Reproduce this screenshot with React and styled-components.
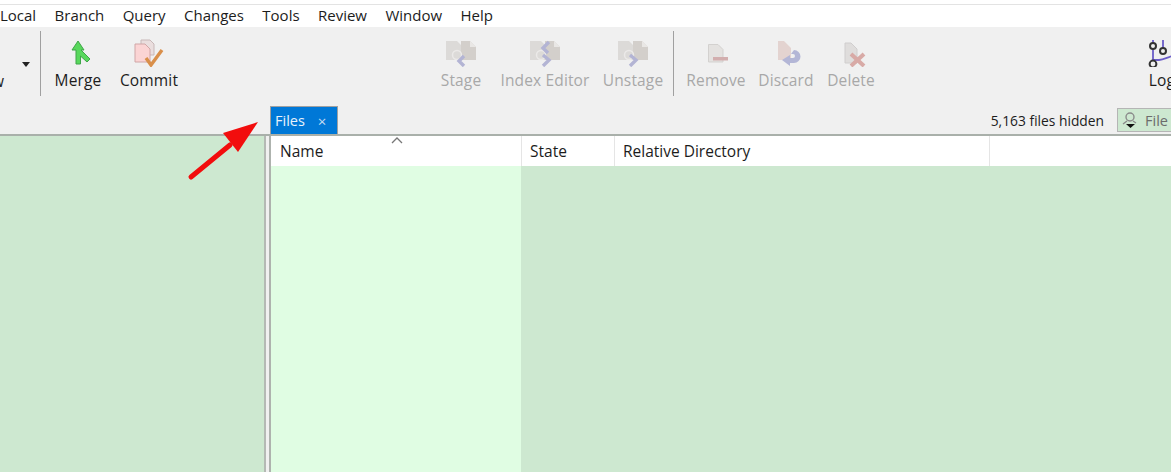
import React from "react";
import styled, { createGlobalStyle } from "styled-components";

const Global = createGlobalStyle`
  html, body { margin: 0; padding: 0; background: #fff; overflow: hidden; }
  body { font-family: "Open Sans", "Noto Sans", sans-serif; }
`;

const Page = styled.div`
  position: relative;
  width: 1171px;
  height: 472px;
  display: flex;
  flex-direction: column;
  overflow: hidden;
  background: #f0f0f0;
`;

const TopStrip = styled.div`
  height: 4px;
  background: #fff;
  border-bottom: 1px solid #e3e3e3;
`;

const MenuBar = styled.div`
  height: 22px;
  box-sizing: border-box;
  padding-bottom: 2px;
  background: #fff;
  display: flex;
  align-items: center;
  gap: 18.4px;
  font-size: 15px;
  color: #1c1c1c;
`;

const Toolbar = styled.div`
  height: 78px;
  display: flex;
  align-items: stretch;
  padding-top: 4px;
  box-sizing: border-box;
  font-size: 15.5px;
  letter-spacing: 0.15px;
`;

const Separator = styled.div`
  width: 1px;
  height: 65px;
  background: #a0a0a0;
  margin-left: ${(p) => p.$left}px;
  margin-right: ${(p) => p.$right || 0}px;
  flex: none;
`;

const Tool = styled.div`
  width: ${(p) => p.$width}px;
  margin-right: ${(p) => p.$gap || 0}px;
  padding-top: 8px;
  display: flex;
  flex-direction: column;
  align-items: center;
  flex: none;
  white-space: nowrap;
  color: ${(p) => (p.$off ? "#a8a8a8" : "#1c1c1c")};
  svg { width: 32px; height: 28px; flex: none; margin-bottom: 2px; display: block; }
`;

const Dropdown = styled.div`
  width: 40px;
  flex: none;
  position: relative;
  color: #1c1c1c;
  display: flex;
  align-items: flex-end;
  padding-bottom: 13px;
  box-sizing: border-box;
  margin-left: -8px;
  &::after {
    content: "";
    position: absolute;
    left: 30px;
    top: 31px;
    border: 4px solid transparent;
    border-top: 5px solid #222;
    border-bottom: 0;
  }
`;

const TabStrip = styled.div`
  height: 29px;
  display: flex;
  align-items: flex-end;
  padding-left: 270px;
  border-bottom: 2px solid #a9b0aa;
`;

const Tab = styled.div`
  width: 68px;
  height: 28px;
  box-sizing: border-box;
  background: #0078d7;
  border: 1px solid #a0a0a0;
  border-bottom: 0;
  color: #e8f2fb;
  font-size: 14.5px;
  display: flex;
  align-items: center;
  padding-left: 4px;
  span { margin-left: 13px; font-size: 15px; color: #c5dcf2; }
`;

const Hidden = styled.div`
  margin-left: auto;
  display: flex;
  align-items: center;
  font-size: 13.8px;
  color: #1c1c1c;
  height: 28px;
`;

const FilterBox = styled.div`
  width: 60px;
  height: 24px;
  margin-left: 13px;
  margin-right: -6px;
  box-sizing: border-box;
  border: 1px solid #b5b5b5;
  background: #cde8d0;
  display: flex;
  align-items: center;
  gap: 6px;
  padding-left: 3px;
  color: #6c6c6c;
  font-size: 14.5px;
  svg { flex: none; }
`;

const Panes = styled.div`
  flex: 1;
  display: flex;
  min-height: 0;
`;

const LeftPane = styled.div`
  width: 264px;
  flex: none;
  background: #cde8d0;
  border-right: 2px solid #b4b9b4;
`;

const RightPane = styled.div`
  margin-left: 3px;
  flex: 1;
  display: flex;
  flex-direction: column;
  border-left: 2px solid #aeb3ae;
`;

const HeaderRow = styled.div`
  height: 30px;
  background: #fff;
  display: flex;
  font-size: 15.5px;
  color: #1c1c1c;
`;

const HeaderCell = styled.div`
  position: relative;
  width: ${(p) => p.$width}px;
  flex: none;
  box-sizing: border-box;
  padding-left: ${(p) => p.$pad || 8}px;
  display: flex;
  align-items: center;
  border-right: 1px solid #e5e5e5;
`;

const SortCaret = styled.svg`
  position: absolute;
  left: 119px;
  top: 0;
`;

const Grid = styled.div`
  flex: 1;
  display: flex;
  background: #cde8d0;
`;

const NameColumn = styled.div`
  width: 250px;
  background: #e0fde3;
`;

const Arrow = styled.svg`
  position: absolute;
  left: 180px;
  top: 115px;
`;

const MergeIcon = () => (
  <svg viewBox="0 0 32 28">
    <path d="M16 2 L10 11 L14 11 L14 25 L18.5 25 L18.5 17 L25 23 L28 20 L19 11 L22 11 Z" fill="#58d85c" stroke="#3fa548" strokeWidth="1" />
  </svg>
);

const CommitIcon = () => (
  <svg viewBox="0 0 32 28">
    <path d="M8 1 H17 L21 5 V16 H8 Z" fill="#eadede" stroke="#c8b8b8" />
    <path d="M2 5 H12 L17 10 V23 H2 Z" fill="#fbd4d4" stroke="#d0a6a6" />
    <path d="M13 19 L18 26 L29 11" fill="none" stroke="#d98f4a" strokeWidth="3.4" />
  </svg>
);

const pageShapes = (
  <>
    <path d="M1 2 H12 L16 6 V21 H1 Z" fill="#dcdad8" />
    <path d="M16 2 H25 L31 8 V21 H16 Z" fill="#d3cfcb" />
    <path d="M25 2 V8 H31 Z" fill="#e9e7e5" />
    <circle cx="12" cy="16" r="4.5" fill="none" stroke="#ebe9e8" strokeWidth="1.5" />
  </>
);

const StageIcon = () => (
  <svg viewBox="0 0 32 28">
    {pageShapes}
    <path d="M19 17 L14 22 L19 27" fill="none" stroke="#b3b4d4" strokeWidth="3.4" />
  </svg>
);

const IndexIcon = () => (
  <svg viewBox="0 0 32 28">
    {pageShapes}
    <path d="M20 3 L14 9 L19 14" fill="none" stroke="#b3b4d4" strokeWidth="3.4" />
    <path d="M14 16 L20 21 L14 27" fill="none" stroke="#b3b4d4" strokeWidth="3.4" />
  </svg>
);

const UnstageIcon = () => (
  <svg viewBox="0 0 32 28">
    {pageShapes}
    <path d="M13 16 L19 21 L13 27" fill="none" stroke="#b3b4d4" strokeWidth="3.4" />
  </svg>
);

const RemoveIcon = () => (
  <svg viewBox="0 0 32 28">
    <path d="M8.5 5.5 H18 L23 10.5 V23 H8.5 Z" fill="#e4e2e0" stroke="#d3d1cf" />
    <rect x="13" y="18" width="15" height="3.5" fill="#d2aeae" />
  </svg>
);

const DiscardIcon = () => (
  <svg viewBox="0 0 32 28">
    <path d="M8 2 H14 L21 9 V21 H8 Z" fill="#e3d3d0" />
    <path d="M24 11 A6.5 6.5 0 0 1 24 24 L20 24 L20 27 L12 21 L20 16 L20 19 L23 19 A2 2 0 0 0 23 15 L21 15 Z" fill="#b3b6d6" />
  </svg>
);

const DeleteIcon = () => (
  <svg viewBox="0 0 32 28">
    <path d="M10 4 H16 L22 10 V24 H10 Z" fill="#dfdddc" stroke="#d0cece" />
    <path d="M16 15 L29 27 M29 15 L16 27" stroke="#d8aaa6" strokeWidth="4" />
  </svg>
);

const LogIcon = () => (
  <svg viewBox="0 0 32 28">
    <path d="M7 1 V25 M17 1 V12 M7 21 H13 C17 21 20 19 26 17 M27 1 V8" fill="none" stroke="#6a5cc8" strokeWidth="1.8" />
    <g fill="#f0f0f0" stroke="#333" strokeWidth="2">
      <circle cx="7" cy="7" r="3" />
      <circle cx="17" cy="12" r="3" />
      <circle cx="7" cy="25" r="3.4" />
      <circle cx="29" cy="7" r="3" />
    </g>
  </svg>
);

const FilterIcon = () => (
  <svg width="18" height="18" viewBox="0 0 18 18">
    <circle cx="9" cy="6" r="4" fill="none" stroke="#8a8a8a" strokeWidth="1.4" />
    <path d="M6 10 L2 13 M12 10 L15 12" stroke="#8a8a8a" strokeWidth="1.4" />
    <path d="M5 13 H14 L9.5 17 Z" fill="#111" />
  </svg>
);

const menuItems = ["Local", "Branch", "Query", "Changes", "Tools", "Review", "Window", "Help"];

const App = () => (
  <Page>
    <Global />
    <TopStrip />
    <MenuBar>
      {menuItems.map((item) => (
        <span key={item}>{item}</span>
      ))}
    </MenuBar>
    <Toolbar>
      <Dropdown>w</Dropdown>
      <Separator $left="8" />
      <Tool $width="74"><MergeIcon />Merge</Tool>
      <Tool $width="68" $gap="248"><CommitIcon />Commit</Tool>
      <Tool $width="60" $gap="6" $off><StageIcon />Stage</Tool>
      <Tool $width="96" $gap="6" $off><IndexIcon />Index Editor</Tool>
      <Tool $width="68" $off><UnstageIcon />Unstage</Tool>
      <Separator $left="6" $right="7" />
      <Tool $width="70" $off><RemoveIcon />Remove</Tool>
      <Tool $width="70" $off><DiscardIcon />Discard</Tool>
      <Tool $width="60" $gap="266" $off><DeleteIcon />Delete</Tool>
      <Tool $width="30"><LogIcon />Log</Tool>
    </Toolbar>
    <TabStrip>
      <Tab>Files<span>×</span></Tab>
      <Hidden>
        5,163 files hidden
        <FilterBox><FilterIcon />File</FilterBox>
      </Hidden>
    </TabStrip>
    <Panes>
      <LeftPane />
      <RightPane>
        <HeaderRow>
          <HeaderCell $width="251" $pad="9">
            Name
            <SortCaret width="14" height="8" viewBox="0 0 14 8">
              <path d="M2 7 L7 2 L12 7" fill="none" stroke="#777" strokeWidth="1.3" />
            </SortCaret>
          </HeaderCell>
          <HeaderCell $width="93">State</HeaderCell>
          <HeaderCell $width="375">Relative Directory</HeaderCell>
        </HeaderRow>
        <Grid>
          <NameColumn />
        </Grid>
      </RightPane>
    </Panes>
    <Arrow width="90" height="75" viewBox="0 0 90 75">
      <path d="M11 62 L50 30" stroke="#f20d0d" strokeWidth="5" strokeLinecap="round" />
      <path d="M78 7 L43 18 L58 37 Z" fill="#f20d0d" />
    </Arrow>
  </Page>
);

export default App;
